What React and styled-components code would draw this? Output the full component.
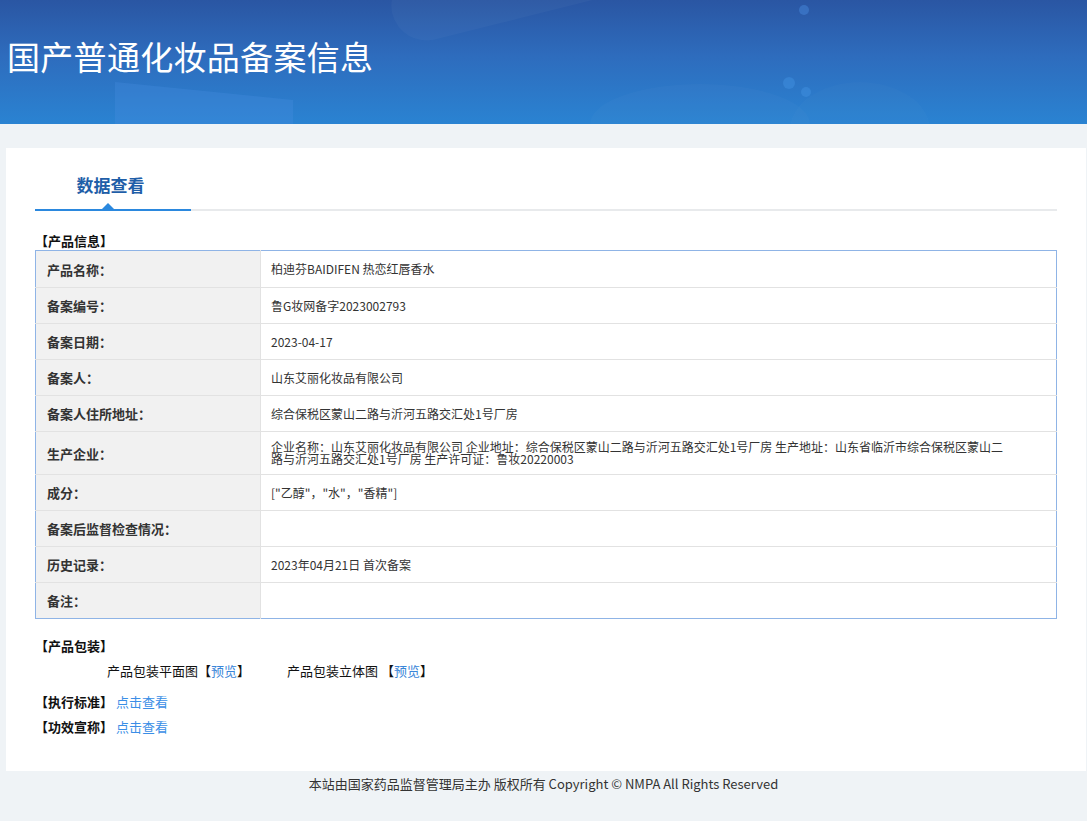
import React from "react";
import styled, { createGlobalStyle } from "styled-components";

const Global = createGlobalStyle`
  html, body { margin: 0; padding: 0; }
  body {
    background: #eff3f6;
    font-family: "Microsoft YaHei", "Noto Sans CJK SC", "Noto Sans", sans-serif;
    color: #333;
  }
  * { box-sizing: border-box; }
`;

const Header = styled.header`
  position: relative;
  height: 124px;
  overflow: hidden;
  background: linear-gradient(180deg, #2a56a3 0%, #2e6cbd 45%, #2a83d2 100%);
`;

const Deco = styled.svg`
  position: absolute;
  inset: 0;
  width: 100%;
  height: 100%;
`;

const Title = styled.h1`
  position: relative;
  margin: 0;
  padding: 37px 0 0 7px;
  font-size: 33px;
  line-height: 38px;
  font-weight: 400;
  color: #fff;
  letter-spacing: 0.3px;
`;

const Card = styled.main`
  background: #fff;
  margin: 24px 1px 0 6px;
  padding: 0 29px 35px;
`;

const TabBar = styled.div`
  display: flex;
  border-bottom: 2px solid #e8eaec;
`;

const Tab = styled.div`
  position: relative;
  width: 156px;
  padding: 24px 5px 0 0;
  height: 63px;
  margin-bottom: -2px;
  text-align: center;
  font-size: 17px;
  line-height: 26px;
  font-weight: 700;
  color: #1f5ea8;
  border-bottom: 2px solid #2b88de;
  &::after {
    content: "";
    position: absolute;
    left: 67px;
    bottom: 0;
    border-left: 6px solid transparent;
    border-right: 6px solid transparent;
    border-bottom: 6px solid #2b88de;
  }
`;

const SectionTitle = styled.div`
  font-size: 13px;
  font-weight: 700;
  line-height: 18px;
  color: #111;
  margin-top: ${(p) => p.$top || 0}px;
`;

const Table = styled.table`
  width: 100%;
  border-collapse: collapse;
  border: 1px solid #8fb4e6;
`;

const Row = styled.tr`
  height: ${(p) => p.$h || 36}px;
  border-bottom: 1px solid #e2e2e2;
  &:last-child { border-bottom: none; }
`;

const Label = styled.td`
  width: 225px;
  background: #f1f1f1;
  border-right: 1px solid #e2e2e2;
  padding: 0 0 0 11px;
  font-size: 13px;
  font-weight: 700;
  color: #333;
  vertical-align: middle;
`;

const Value = styled.td`
  padding: 0 10px;
  font-size: 12px;
  line-height: 12px;
  color: #333;
  vertical-align: middle;
`;

const Wrap = styled.div`
  max-width: 738px;
  line-height: 12px;
`;

const PackRow = styled.div`
  display: flex;
  gap: 37px;
  padding-left: 72px;
  margin-top: 7px;
  font-size: 13px;
  line-height: 18px;
  color: #111;
`;

const Link = styled.span`
  color: #3a86d8;
`;

const LinkRow = styled.div`
  display: flex;
  align-items: center;
  gap: 3px;
  margin-top: ${(p) => p.$top}px;
  line-height: 18px;
`;

const LinkLabel = styled.span`
  font-size: 13px;
  font-weight: 700;
  color: #111;
`;

const MoreLink = styled.span`
  font-size: 13px;
  color: #3a8ee6;
`;

const Footer = styled.footer`
  text-align: center;
  font-size: 13px;
  line-height: 26px;
  color: #333;
  padding-bottom: 25px;
`;

const rows = [
  ["产品名称：", "柏迪芬BAIDIFEN 热恋红唇香水", 37],
  ["备案编号：", "鲁G妆网备字2023002793"],
  ["备案日期：", "2023-04-17"],
  ["备案人：", "山东艾丽化妆品有限公司"],
  ["备案人住所地址：", "综合保税区蒙山二路与沂河五路交汇处1号厂房"],
  [
    "生产企业：",
    "企业名称：山东艾丽化妆品有限公司 企业地址：综合保税区蒙山二路与沂河五路交汇处1号厂房 生产地址：山东省临沂市综合保税区蒙山二路与沂河五路交汇处1号厂房 生产许可证：鲁妆20220003",
    43,
    true,
  ],
  ["成分：", "[\"乙醇\"，\"水\"，\"香精\"]"],
  ["备案后监督检查情况：", ""],
  ["历史记录：", "2023年04月21日 首次备案"],
  ["备注：", "", 36],
];

export default function App() {
  return (
    <>
      <Global />
      <Header>
        <Deco viewBox="0 0 1087 124" preserveAspectRatio="none">
          <rect x="395" y="-30" width="360" height="70" rx="35" fill="#ffffff" opacity="0.03" transform="rotate(-14 430 20)" />
          <polygon points="115,82 293,100 293,124 115,124" fill="#4a8ee0" opacity="0.3" />
          <ellipse cx="700" cy="124" rx="110" ry="40" fill="#ffffff" opacity="0.02" />
          <ellipse cx="860" cy="130" rx="70" ry="48" fill="#ffffff" opacity="0.015" />
          <circle cx="804" cy="10" r="5" fill="#4a8be0" opacity="0.45" />
          <circle cx="789" cy="83" r="6" fill="#3f8fe0" opacity="0.5" />
          <circle cx="806" cy="92" r="5" fill="#3f8fe0" opacity="0.5" />
        </Deco>
        <Title>国产普通化妆品备案信息</Title>
      </Header>
      <Card>
        <TabBar>
          <Tab>数据查看</Tab>
        </TabBar>
        <SectionTitle $top={21}>【产品信息】</SectionTitle>
        <Table>
          <tbody>
            {rows.map(([k, v, h, multi]) => (
              <Row key={k} $h={h}>
                <Label>{k}</Label>
                <Value>{multi ? <Wrap>{v}</Wrap> : v}</Value>
              </Row>
            ))}
          </tbody>
        </Table>
        <SectionTitle $top={18}>【产品包装】</SectionTitle>
        <PackRow>
          <span>
            产品包装平面图【<Link>预览</Link>】
          </span>
          <span>
            产品包装立体图 【<Link>预览</Link>】
          </span>
        </PackRow>
        <LinkRow $top={13}>
          <LinkLabel>【执行标准】</LinkLabel>
          <MoreLink>点击查看</MoreLink>
        </LinkRow>
        <LinkRow $top={7}>
          <LinkLabel>【功效宣称】</LinkLabel>
          <MoreLink>点击查看</MoreLink>
        </LinkRow>
      </Card>
      <Footer>本站由国家药品监督管理局主办 版权所有 Copyright © NMPA All Rights Reserved</Footer>
    </>
  );
}
